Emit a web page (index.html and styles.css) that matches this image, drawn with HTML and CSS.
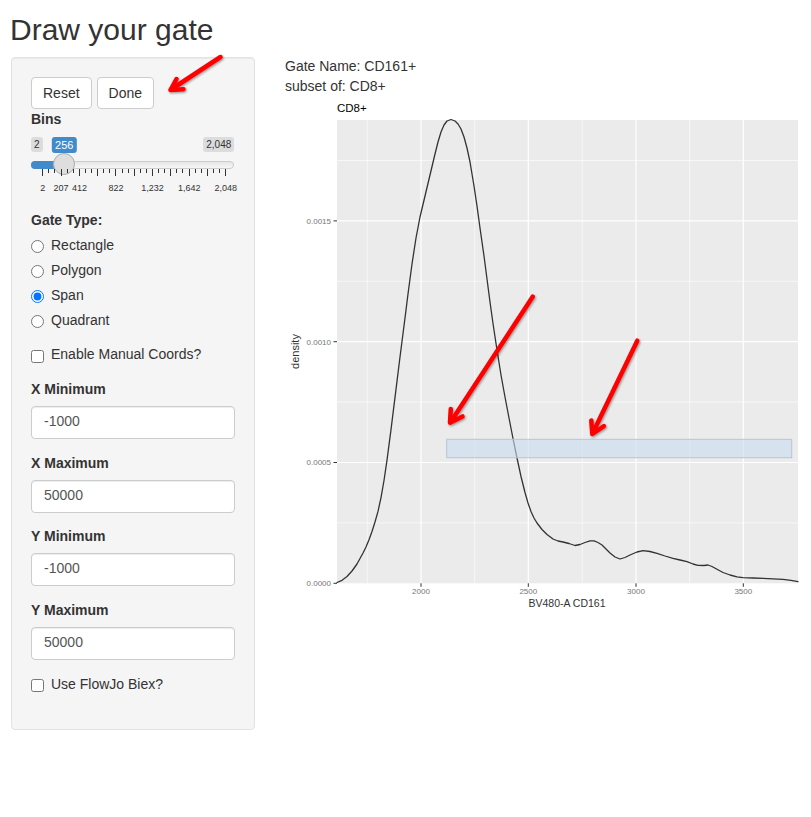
FILE: index.html
```html
<!DOCTYPE html>
<html lang="en">
<head>
<meta charset="utf-8">
<title>Draw your gate</title>
<link rel="stylesheet" href="styles.css">
</head>
<body>
<div class="page">
  <h2 class="title">Draw your gate</h2>
  <div class="layout">
    <aside class="well">
      <div class="btn-row">
        <button class="btn" type="button">Reset</button>
        <button class="btn" type="button">Done</button>
      </div>

      <div class="group">
        <label class="ctl-label">Bins</label>
        <div class="irs">
          <span class="irs-min">2</span>
          <span class="irs-max">2,048</span>
          <span class="irs-line"></span>
          <span class="irs-bar"></span>
          <span class="irs-handle"></span>
          <span class="irs-single">256</span>
          <div class="irs-grid">
            <div class="ticks">
              <i class="tick big"></i><i class="tick"></i><i class="tick"></i>
              <i class="tick big"></i><i class="tick"></i><i class="tick"></i>
              <i class="tick big"></i><i class="tick"></i><i class="tick"></i>
              <i class="tick big"></i><i class="tick"></i><i class="tick"></i>
              <i class="tick big"></i><i class="tick"></i><i class="tick"></i>
              <i class="tick big"></i><i class="tick"></i><i class="tick"></i>
              <i class="tick big"></i><i class="tick"></i><i class="tick"></i>
              <i class="tick big"></i><i class="tick"></i><i class="tick"></i>
              <i class="tick big"></i><i class="tick"></i><i class="tick"></i>
              <i class="tick big"></i><i class="tick"></i><i class="tick"></i>
              <i class="tick big"></i>
            </div>
            <span class="grid-text" style="left:0.5px">2</span>
            <span class="grid-text" style="left:18.8px">207</span>
            <span class="grid-text" style="left:37.1px">412</span>
            <span class="grid-text" style="left:73.7px">822</span>
            <span class="grid-text" style="left:110.3px">1,232</span>
            <span class="grid-text" style="left:146.9px">1,642</span>
            <span class="grid-text" style="left:183.5px">2,048</span>
          </div>
        </div>
      </div>

      <div class="group">
        <label class="ctl-label">Gate Type:</label>
        <div class="radios">
          <label class="opt"><input type="radio" name="gt"><span>Rectangle</span></label>
          <label class="opt"><input type="radio" name="gt"><span>Polygon</span></label>
          <label class="opt"><input type="radio" name="gt" checked><span>Span</span></label>
          <label class="opt"><input type="radio" name="gt"><span>Quadrant</span></label>
        </div>
      </div>

      <label class="opt check-manual"><input type="checkbox"><span>Enable Manual Coords?</span></label>

      <div class="field">
        <label class="ctl-label field-label">X Minimum</label>
        <input class="text-input" type="text" value="-1000">
      </div>
      <div class="field">
        <label class="ctl-label field-label">X Maximum</label>
        <input class="text-input" type="text" value="50000">
      </div>
      <div class="field">
        <label class="ctl-label field-label">Y Minimum</label>
        <input class="text-input" type="text" value="-1000">
      </div>
      <div class="field last">
        <label class="ctl-label field-label">Y Maximum</label>
        <input class="text-input" type="text" value="50000">
      </div>

      <label class="opt check-biex"><input type="checkbox"><span>Use FlowJo Biex?</span></label>
    </aside>

    <main class="main">
      <p class="info">Gate Name: CD161+</p>
      <p class="info">subset of: CD8+</p>
      <svg class="plot" viewBox="285 96 526 530" width="526" height="530" xmlns="http://www.w3.org/2000/svg">
        <text class="plot-title" x="337" y="111.5">CD8+</text>
        <rect x="337" y="120" width="461" height="463.3" fill="#ebebeb"/>
        <g stroke="#ffffff" stroke-width="0.6">
          <line x1="337" x2="798" y1="160.5" y2="160.5"/>
          <line x1="337" x2="798" y1="281.3" y2="281.3"/>
          <line x1="337" x2="798" y1="402" y2="402"/>
          <line x1="337" x2="798" y1="522.9" y2="522.9"/>
          <line y1="120" y2="583.3" x1="367.3" x2="367.3"/>
          <line y1="120" y2="583.3" x1="474.7" x2="474.7"/>
          <line y1="120" y2="583.3" x1="582.2" x2="582.2"/>
          <line y1="120" y2="583.3" x1="689.7" x2="689.7"/>
        </g>
        <g stroke="#ffffff" stroke-width="1.2">
          <line x1="337" x2="798" y1="220.9" y2="220.9"/>
          <line x1="337" x2="798" y1="341.7" y2="341.7"/>
          <line x1="337" x2="798" y1="462.5" y2="462.5"/>
          <line y1="120" y2="583.3" x1="421" x2="421"/>
          <line y1="120" y2="583.3" x1="528.3" x2="528.3"/>
          <line y1="120" y2="583.3" x1="636" x2="636"/>
          <line y1="120" y2="583.3" x1="743.3" x2="743.3"/>
        </g>
        <polyline fill="none" stroke="#333333" stroke-width="1.3" stroke-linejoin="round" stroke-linecap="round"
          points="337,582.5 342,580.3 347,576.5 352,571 357,564 363,553 366,547 369,539.8 372,531.5 375,522 378,511.4 381,497.6 384,480.5 387,460.1 391,429.7 395,397.3 400,357 405,318 408,294 412,264 416,238 420,217 425,196 430,175 435,154 438,142 441,132 444,125 447,121 451,119.5 455,121 458,124 461,129 464,137 467,148 470,162 474,186 477,206 480,228 484,256 487,279 490,302 493,323.5 497,350 501,375 505,397 509,418 513,438.5 517,458 521,476.5 525,492.5 528,503 531,511.5 534,518 537,523 542,529.5 547,534.5 553,539 558,541 563,542 569,543.5 575,545.5 580,544.5 585,542.5 590,540.8 594,540.8 598,542.5 602,545 606,549 610,553 615,557 620,559 625,557.5 630,555 637,552 643,550.7 650,551.5 657,553.3 665,556 673,558.3 680,560 687,561.7 693,564 698,565.3 704,565.5 708,565 712,566.5 717,569.3 723,572.5 730,575 737,576.8 743,577.7 753,578 763,578.3 773,578.8 783,579.3 791,580.3 798,581.7"/>
        <rect x="446.7" y="439.3" width="345" height="18.4" fill="rgb(200,220,240)" fill-opacity="0.6" stroke="#b5c6d8" stroke-width="1"/>
        <g stroke="#333333" stroke-width="1">
          <line x1="333.5" x2="337" y1="220.9" y2="220.9"/>
          <line x1="333.5" x2="337" y1="341.7" y2="341.7"/>
          <line x1="333.5" x2="337" y1="462.5" y2="462.5"/>
          <line x1="333.5" x2="337" y1="583.3" y2="583.3"/>
          <line y1="583.3" y2="586.8" x1="421" x2="421"/>
          <line y1="583.3" y2="586.8" x1="528.3" x2="528.3"/>
          <line y1="583.3" y2="586.8" x1="636" x2="636"/>
          <line y1="583.3" y2="586.8" x1="743.3" x2="743.3"/>
        </g>
        <g class="tick-label y-ticks">
          <text x="331" y="223.8">0.0015</text>
          <text x="331" y="344.6">0.0010</text>
          <text x="331" y="465.4">0.0005</text>
          <text x="331" y="586.2">0.0000</text>
        </g>
        <g class="tick-label x-ticks">
          <text x="421" y="594.3">2000</text>
          <text x="528.3" y="594.3">2500</text>
          <text x="636" y="594.3">3000</text>
          <text x="743.3" y="594.3">3500</text>
        </g>
        <text class="axis-title" x="567" y="606.5">BV480-A CD161</text>
        <text class="axis-title y-title" transform="translate(298.5 351.5) rotate(-90)">density</text>
      </svg>
    </main>
  </div>
</div>

<svg class="annot" width="811" height="817" viewBox="0 0 811 817" xmlns="http://www.w3.org/2000/svg" aria-hidden="true">
  <defs>
    <filter id="shadow" x="-20%" y="-20%" width="140%" height="140%">
      <feDropShadow dx="1" dy="1.2" stdDeviation="0.9" flood-color="#000" flood-opacity="0.4"/>
    </filter>
  </defs>
  <g fill="none" stroke="#ff0000" stroke-width="4.5" stroke-linecap="round" stroke-linejoin="round" filter="url(#shadow)">
    <line x1="220.5" y1="57" x2="171" y2="89.5"/>
    <polyline points="176.5,79 170.5,90 183.5,89.2"/>
    <line x1="532.7" y1="296.7" x2="451" y2="421.5"/>
    <polyline points="450.8,409 450,422.7 462.5,416.4"/>
    <line x1="637.3" y1="340.7" x2="593" y2="432.5"/>
    <polyline points="591.3,420.5 592.3,434 603.9,426.1"/>
  </g>
</svg>
</body>
</html>
```

FILE: styles.css
```css
* {
  box-sizing: border-box;
}

html,
body {
  margin: 0;
  background: #ffffff;
}

body {
  position: relative;
  width: 811px;
  height: 817px;
  overflow: hidden;
  font-family: "Liberation Sans", Arial, Helvetica, sans-serif;
  font-size: 14px;
  line-height: 20px;
  color: #333333;
}

.page {
  padding-left: 11px;
}

.title {
  margin: 13px 0 10px -1px;
  font-size: 30px;
  line-height: 33px;
  font-weight: normal;
  color: #333333;
}

.layout {
  display: flex;
  align-items: flex-start;
  gap: 30px;
}

/* Sidebar well */
.well {
  flex: none;
  width: 244px;
  margin-top: 1px;
  padding: 19px;
  background: #f5f5f5;
  border: 1px solid #e3e3e3;
  border-radius: 4px;
  box-shadow: inset 0 1px 1px rgba(0, 0, 0, 0.05);
}

.btn-row {
  display: flex;
  gap: 5px;
  height: 32px;
}

.btn {
  height: 32px;
  padding: 5px 11px;
  font-family: inherit;
  font-size: 14px;
  line-height: 20px;
  color: #333333;
  background: #ffffff;
  border: 1px solid #cccccc;
  border-radius: 4px;
}

.ctl-label {
  display: block;
  margin-bottom: 5px;
  font-weight: bold;
  line-height: 20px;
}

/* Range slider */
.irs {
  position: relative;
  height: 61px;
  margin-bottom: 15px;
}

.irs-min,
.irs-max {
  position: absolute;
  top: 2.7px;
  padding: 1px 3px;
  font-size: 10px;
  line-height: 13.3px;
  color: #333333;
  background: rgba(0, 0, 0, 0.1);
  border-radius: 3px;
}

.irs-min {
  left: 0;
}

.irs-max {
  right: 0.7px;
}

.irs-line {
  position: absolute;
  left: 0;
  right: 0.7px;
  top: 27px;
  height: 8px;
  border: 1px solid #cccccc;
  border-radius: 8px;
  background: linear-gradient(to bottom, #dedede -50%, #ffffff 150%);
}

.irs-bar {
  position: absolute;
  left: 0;
  top: 27px;
  width: 34px;
  height: 8px;
  background: #428bca;
  border-radius: 8px 0 0 8px;
}

.irs-handle {
  position: absolute;
  left: 22.3px;
  top: 19px;
  width: 22px;
  height: 22px;
  background: #dedede;
  border: 1px solid #ababab;
  border-radius: 50%;
  box-shadow: 1px 1px 3px rgba(255, 255, 255, 0.3);
}

.irs-single {
  position: absolute;
  left: 33.3px;
  top: 2.7px;
  transform: translateX(-50%);
  padding: 1px 3px;
  font-size: 11px;
  line-height: 14.7px;
  color: #ffffff;
  background: #428bca;
  border-radius: 3px;
}

.irs-grid {
  position: absolute;
  left: 11.3px;
  top: 35.3px;
  width: 184px;
  height: 22px;
}

.ticks {
  display: flex;
  justify-content: space-between;
  align-items: flex-start;
}

.tick {
  display: block;
  width: 1px;
  height: 3.5px;
  background: #333333;
}

.tick.big {
  height: 7px;
}

.grid-text {
  position: absolute;
  top: 12.3px;
  transform: translateX(-50%);
  font-size: 9px;
  line-height: 12px;
  color: #333333;
  white-space: nowrap;
}

/* Radios & checkboxes */
.radios {
  display: flex;
  flex-direction: column;
  gap: 5px;
  margin-bottom: 14px;
}

.opt {
  display: flex;
  align-items: flex-start;
  line-height: 20px;
  font-weight: normal;
}

.opt input {
  flex: none;
  width: 13px;
  height: 13px;
  margin: 5px 7px 0 0;
}

.check-manual {
  margin-bottom: 15px;
}

.check-manual input,
.check-biex input {
  margin-top: 5.5px;
}

.check-biex {
  margin-top: 14px;
  margin-bottom: 16px;
}

/* Numeric fields */
.field {
  margin-bottom: 13.5px;
}

.field.last {
  margin-bottom: 0;
}

.field-label {
  margin-bottom: 7px;
}

.text-input {
  display: block;
  width: 100%;
  height: 33px;
  padding: 4px 12px 7px;
  font-family: inherit;
  font-size: 14px;
  line-height: 20px;
  color: #555555;
  background: #ffffff;
  border: 1px solid #cccccc;
  border-radius: 4px;
  box-shadow: inset 0 1px 1px rgba(0, 0, 0, 0.075);
}

/* Main plot area */
.main {
  flex: 1;
  min-width: 0;
}

.info {
  margin: 0;
  line-height: 20px;
}

.plot {
  display: block;
  width: 526px;
  height: 530px;
}

.plot-title {
  font-family: "Liberation Sans", Arial, sans-serif;
  font-size: 11.5px;
  fill: #000000;
}

.tick-label text {
  font-family: "Liberation Sans", Arial, sans-serif;
  font-size: 8px;
  fill: #777777;
}

.y-ticks text {
  text-anchor: end;
}

.x-ticks text {
  text-anchor: middle;
}

.axis-title {
  font-family: "Liberation Sans", Arial, sans-serif;
  font-size: 10.5px;
  fill: #333333;
  text-anchor: middle;
}

.y-title {
  font-size: 11px;
}

/* Red annotation arrows laid over the screenshot */
.annot {
  position: absolute;
  left: 0;
  top: 0;
  pointer-events: none;
}
```
